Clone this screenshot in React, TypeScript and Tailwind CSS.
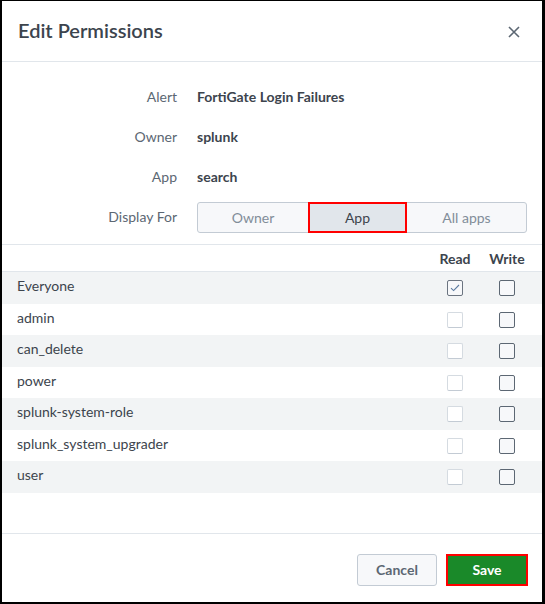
import React from "react";

const rows = [
  { name: "Everyone", read: "checked" },
  { name: "admin", read: "disabled" },
  { name: "can_delete", read: "disabled" },
  { name: "power", read: "disabled" },
  { name: "splunk-system-role", read: "disabled" },
  { name: "splunk_system_upgrader", read: "disabled" },
  { name: "user", read: "disabled" },
];

function Box({ kind }: { kind: "checked" | "disabled" | "normal" }) {
  if (kind === "checked") {
    return (
      <div className="w-4 h-4 rounded-[2px] border border-[#6b7480] bg-[#f7f8fa] flex items-center justify-center">
        <svg width="10" height="8" viewBox="0 0 10 8" fill="none">
          <path d="M1 4.2 L3.6 6.6 L9 1" stroke="#5a7aa0" strokeWidth="1.1" />
        </svg>
      </div>
    );
  }
  if (kind === "disabled") {
    return <div className="w-4 h-4 rounded-[2px] border border-[#d5dbe1] border-b-[#c3cbd4] bg-white" />;
  }
  return <div className="w-4 h-4 rounded-[2px] border border-[#5c6773] bg-[#f7f8fa]" />;
}

export default function App() {
  return (
    <div
      className="w-[545px] h-[604px] bg-white border-l-2 border-t border-r-[3px] border-b-2 border-black flex flex-col text-[#3c444d]"
      style={{ fontFamily: "Lato, 'Open Sans', sans-serif" }}
    >
      <div className="h-[61px] shrink-0 flex items-center justify-between pl-4 pr-[22px] border-b border-[#e1e6eb]">
        <div className="text-[20px] font-semibold text-[#3c444d] pb-[3px]">Edit Permissions</div>
        <svg width="12" height="12" viewBox="0 0 12 12" className="mt-[1px]">
          <path d="M1 1 L11 11 M11 1 L1 11" stroke="#5c6773" strokeWidth="1.6" />
        </svg>
      </div>

      <div className="pt-[15px] pb-[7px] border-b border-[#e1e6eb] shrink-0">
        {[
          ["Alert", "FortiGate Login Failures"],
          ["Owner", "splunk"],
          ["App", "search"],
        ].map(([l, v]) => (
          <div key={l} className="h-10 flex items-center pb-[2px]">
            <div className="w-[175px] text-right text-[14px] text-[#5c6773]">{l}</div>
            <div className="ml-5 text-[14px] font-bold text-[#3c444d]">{v}</div>
          </div>
        ))}
        <div className="h-10 flex items-center">
          <div className="w-[175px] text-right text-[14px] text-[#5c6773] pb-[2px]">Display For</div>
          <div className="ml-5 w-[330px] h-[31px] flex rounded-[3px] border border-[#c3cbd4] bg-[#f7f8fa] text-[14px]">
            <div className="w-[110px] flex items-center justify-center text-[#818d99]">Owner</div>
            <div className="w-[99px] -my-px flex items-center justify-center bg-[#e1e6eb] border-2 border-[#ff0000] text-[#3c444d]">
              App
            </div>
            <div className="flex-1 flex items-center justify-center text-[#818d99]">All apps</div>
          </div>
        </div>
      </div>

      <div className="h-[27px] shrink-0 flex items-center border-b border-[#e1e6eb] text-[14px] font-bold text-[#3c444d]">
        <div className="flex-1" />
        <div className="w-[52px] text-center">Read</div>
        <div className="w-[52px] text-center">Write</div>
        <div className="w-[9px]" />
      </div>

      <div className="shrink-0">
        {rows.map((r, i) => (
          <div
            key={r.name}
            className={`flex items-center ${i % 2 === 0 ? "h-[32px] bg-[#f2f4f5]" : "h-[31px] bg-white"}`}
          >
            <div className="flex-1 pl-[15px] text-[14px] leading-[20px] text-[#3c444d] relative -top-[2px]">{r.name}</div>
            <div className="w-[52px] flex justify-center">
              <Box kind={r.read as "checked" | "disabled"} />
            </div>
            <div className="w-[52px] flex justify-center">
              <Box kind="normal" />
            </div>
            <div className="w-[9px]" />
          </div>
        ))}
      </div>

      <div className="flex-1 border-b border-[#e1e6eb]" />

      <div className="h-[68px] shrink-0 flex items-start justify-end pt-5 pr-[14px] gap-[9px]">
        <div className="w-[80px] h-8 rounded-[3px] border border-[#c3cbd4] bg-[#f7f8fa] flex items-center justify-center text-[14px] font-bold text-[#5c6773] pb-[2px]">
          Cancel
        </div>
        <div className="w-[82px] h-8 border-2 border-[#ff0000] bg-[#1a8929] flex items-center justify-center text-[14px] font-bold text-white pb-[2px]">
          Save
        </div>
      </div>
    </div>
  );
}
